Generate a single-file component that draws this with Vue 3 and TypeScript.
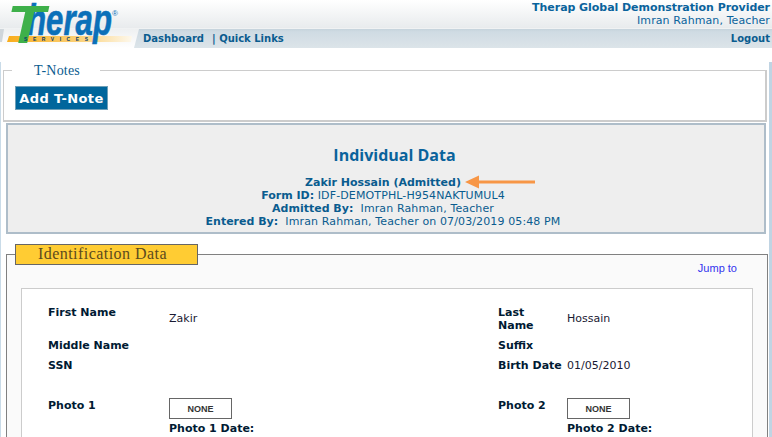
<template>
  <div class="page">
    <header class="top">
      <svg class="logo" width="136" height="48" viewBox="0 0 136 48">
        <defs>
          <linearGradient id="swoosh" x1="0" x2="1" y1="0" y2="0">
            <stop offset="0" stop-color="#f9ad1c" />
            <stop offset="0.6" stop-color="#fbd27c" />
            <stop offset="1" stop-color="#fdf8ec" />
          </linearGradient>
        </defs>
        <polygon points="0,29 4,29 2,42 0,42" fill="#cfd6db" />
        <polygon points="9,36 132,36 131,42 7,42" fill="url(#swoosh)" />
        <text x="27" y="35" class="logo-word" textLength="85" lengthAdjust="spacingAndGlyphs">herap</text>
        <text x="7" y="43" class="logo-t" textLength="38" lengthAdjust="spacingAndGlyphs">T</text>
        <text x="24" y="41.3" class="logo-sub" textLength="64" lengthAdjust="spacing">SERVICES</text>
        <text x="112" y="16" class="logo-reg">®</text>
      </svg>
      <div class="top-main">
        <div class="provider">
          <div class="provider-name">Therap Global Demonstration Provider</div>
          <div class="provider-user">Imran Rahman, Teacher</div>
        </div>
        <div class="nav-wrap">
          <nav class="nav">
            <div class="nav-links">
              <a>Dashboard</a>
              <a class="sep">| Quick Links</a>
            </div>
            <a class="logout">Logout</a>
          </nav>
        </div>
      </div>
    </header>

    <main class="content">
      <fieldset class="notes">
        <legend>T-Notes</legend>
        <button class="add-btn" type="button">Add T-Note</button>
      </fieldset>

      <section class="summary">
        <h1>Individual Data</h1>
        <div class="name-line">
          <b>Zakir Hossain (Admitted)</b>
          <svg class="arrow" width="72" height="14" viewBox="0 0 72 14">
            <path d="M0 7 L14 0.5 L14 5.5 L70 5.5 L70 8.5 L14 8.5 L14 13.5 Z" fill="#f79646" />
          </svg>
        </div>
        <div class="line"><b>Form ID:</b> IDF-DEMOTPHL-H954NAKTUMUL4</div>
        <div class="line"><b>Admitted By:</b>&nbsp; Imran Rahman, Teacher</div>
        <div class="line"><b>Entered By:</b>&nbsp; Imran Rahman, Teacher on 07/03/2019 05:48 PM</div>
      </section>

      <fieldset class="ident">
        <legend>Identification Data</legend>
        <div class="jump"><a>Jump to</a></div>
        <div class="ident-box">
          <div v-for="row in rows" :key="row.l1" class="row" :class="row.cls">
            <div class="lbl">{{ row.l1 }}</div>
            <div class="val">{{ row.v1 }}</div>
            <div class="lbl">{{ row.l2 }}</div>
            <div class="val">{{ row.v2 }}</div>
          </div>
          <div class="row photo">
            <div class="lbl">Photo 1</div>
            <div class="val">
              <div class="none">NONE</div>
              <div class="lbl">Photo 1 Date:</div>
            </div>
            <div class="lbl">Photo 2</div>
            <div class="val">
              <div class="none">NONE</div>
              <div class="lbl">Photo 2 Date:</div>
            </div>
          </div>
        </div>
      </fieldset>
    </main>
  </div>
</template>

<script setup lang="ts">
  const rows = [
    { l1: 'First Name', v1: 'Zakir', l2: 'Last\nName', v2: 'Hossain', cls: 'r-first' },
    { l1: 'Middle Name', v1: '', l2: 'Suffix', v2: '', cls: 'r-mid' },
    { l1: 'SSN', v1: '', l2: 'Birth Date', v2: '01/05/2010', cls: 'r-ssn' },
  ];
</script>

<style>
  html,
  body {
    margin: 0;
    background: #fff;
    overflow: hidden;
  }
</style>

<style scoped>
  .page {
    width: 772px;
    height: 437px;
    overflow: hidden;
    font-family: "DejaVu Sans", Verdana, sans-serif;
    font-size: 11px;
    line-height: 13px;
    color: #036;
  }

  .top {
    position: relative;
    height: 48px;
  }

  .logo {
    position: absolute;
    left: 0;
    top: 0;
    z-index: 2;
  }

  .logo-word {
    font-family: "Liberation Sans", sans-serif;
    font-weight: 700;
    font-style: italic;
    font-size: 44px;
    fill: #0b70b9;
    stroke: #0b70b9;
    stroke-width: 0.6;
  }

  .logo-t {
    font-family: "Liberation Sans", sans-serif;
    font-weight: 700;
    font-style: italic;
    font-size: 53px;
    fill: #3eb04a;
  }

  .logo-sub {
    font-family: "Liberation Sans", sans-serif;
    font-weight: 700;
    font-size: 5px;
    fill: #083c68;
  }

  .logo-reg {
    font-family: "Liberation Sans", sans-serif;
    font-size: 8px;
    fill: #0b70b9;
  }

  .top-main {
    height: 48px;
    display: flex;
    flex-direction: column;
  }

  .provider {
    height: 29px;
    box-sizing: border-box;
    padding: 1px 2px 0 0;
    text-align: right;
    background: linear-gradient(#fff, #e8ebed);
    border-bottom: 1px solid #f0f2f3;
  }

  .provider-name {
    font-weight: 700;
    color: #0a639c;
    line-height: 13px;
    letter-spacing: -0.05px;
  }

  .provider-user {
    color: #0a639c;
    line-height: 14px;
    letter-spacing: 0.1px;
  }

  .nav-wrap {
    height: 19px;
    background: linear-gradient(#eef0f1, #fff);
    padding-left: 134px;
  }

  .nav {
    height: 19px;
    box-sizing: border-box;
    display: flex;
    justify-content: space-between;
    align-items: center;
    font-size: 10px;
    font-weight: 700;
    color: #0a5c8f;
    padding: 0 2px 1px 9px;
    background: linear-gradient(#c5d3dc, #cfdbe3 15%, #dce4e9);
    clip-path: polygon(5px 0, 100% 0, 100% 100%, 0 100%);
  }

  .nav-links {
    display: flex;
    gap: 8px;
  }

  .content {
    height: 389px;
    box-sizing: border-box;
    padding: 0;
    border-left: 1px solid #c9dbe8;
    border-right: 3px solid #c0d4e3;
    position: relative;
  }

  .notes {
    margin: 14px 0 0 2px;
    padding: 6px 11px 12px;
    width: 764px;
    box-sizing: border-box;
    height: 60px;
    border: 1px solid #ccc;
    border-right-width: 2px;
    border-bottom-width: 2px;
  }

  .notes legend {
    font-family: "Liberation Serif", serif;
    font-size: 14px;
    color: #0a5c8f;
    padding: 1px 20px 0 22px;
    margin-left: -3px;
    line-height: 16px;
    letter-spacing: 0.2px;
  }

  .add-btn {
    display: block;
    width: 93px;
    height: 24px;
    padding: 0;
    margin-top: 1px;
    background: #00669c;
    border: 1px solid #6fa0b8;
    color: #fff;
    font-family: "DejaVu Sans", sans-serif;
    font-size: 13px;
    font-weight: 700;
    letter-spacing: 0.4px;
  }

  .summary {
    margin: 1px 0 0 5px;
    width: 760px;
    height: 111px;
    box-sizing: border-box;
    background: #eee;
    border: 2px solid #aebdc9;
    text-align: center;
    padding: 20px 6px 0 0;
    color: #0a5c8f;
  }

  .summary h1 {
    margin: 0 0 11px;
    padding-left: 23px;
    font-family: "Open Sans", sans-serif;
    font-size: 16px;
    line-height: 20px;
    font-weight: 700;
    color: #0a639c;
  }

  .line {
    letter-spacing: 0.12px;
  }

  .line b {
    letter-spacing: 0;
  }

  .name-line {
    position: relative;
  }

  .arrow {
    position: absolute;
    left: 457px;
    top: -1px;
  }

  .ident {
    margin: 10px 0 0 5px;
    width: 762px;
    height: 200px;
    box-sizing: border-box;
    padding: 0 14px;
    border: 1px solid #808080;
    background: #fafafa;
    position: relative;
  }

  .ident legend {
    box-sizing: border-box;
    width: 183px;
    height: 21px;
    padding: 0 0 0 22px;
    margin-left: -6px;
    background: #fc3;
    border: 1px solid #666;
    font-family: "Liberation Serif", serif;
    font-size: 16px;
    line-height: 18px;
    color: #5c4a1e;
    letter-spacing: 0.45px;
  }

  .jump {
    height: 28px;
    margin-top: -5px;
    text-align: right;
    padding: 0 16px 0 0;
    font-family: "Liberation Sans", sans-serif;
    font-size: 11px;
    color: #33e;
    line-height: 16px;
  }

  .ident-box {
    box-sizing: border-box;
    width: 732px;
    height: 160px;
    background: #fff;
    border: 1px solid #ccc;
    padding-top: 17px;
  }

  .row {
    display: grid;
    grid-template-columns: 121px 329px 69px 1fr;
    padding-left: 26px;
    color: #000;
  }

  .lbl {
    font-weight: 700;
    color: #001a33;
    white-space: pre-line;
  }

  .val {
    color: #1a1a33;
  }

  .r-first {
    height: 33px;
  }

  .r-first .val {
    padding-top: 6px;
  }

  .r-mid {
    height: 20px;
  }

  .r-ssn {
    height: 40px;
  }

  .none {
    box-sizing: border-box;
    width: 63px;
    height: 21px;
    margin-top: -1px;
    margin-bottom: 3px;
    border: 1px solid #666;
    font-family: "Liberation Sans", sans-serif;
    font-size: 9px;
    font-weight: 700;
    line-height: 21px;
    text-align: center;
    color: #333;
    background: #fff;
  }
</style>
